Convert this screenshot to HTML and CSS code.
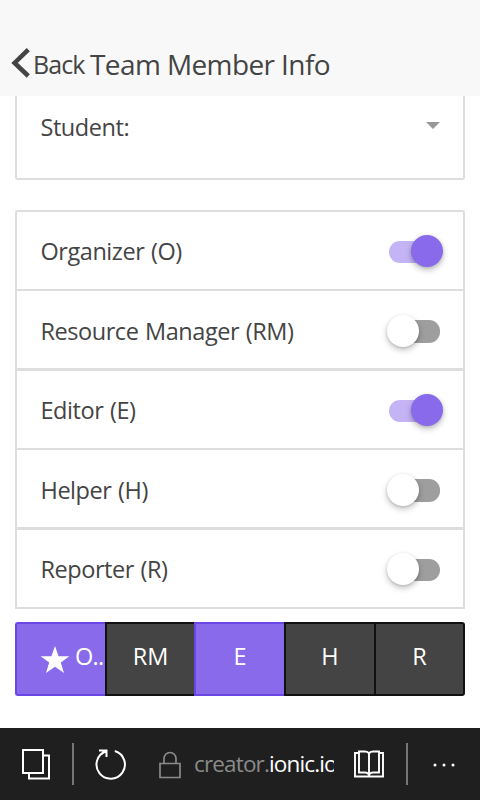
FILE: index.html
```html
<!DOCTYPE html>
<html lang="en">
<head>
<meta charset="utf-8">
<title>Team Member Info</title>
<link rel="stylesheet" href="styles.css">
</head>
<body>
<header class="header">
  <svg class="chevron" width="20" height="32" viewBox="0 0 20 32"><path d="M17.300 2.700 3.600 16l13.700 13" fill="none" stroke="#444" stroke-width="4.500"/></svg>
  <span class="back">Back</span>
  <h1 class="title">Team Member Info</h1>
</header>
<main class="content">
  <section class="card select-card">
    <span class="label">Student:</span>
    <span class="caret"></span>
  </section>
  <section class="card list">
    <div class="row"><span class="label">Organizer (O)</span><span class="toggle on"><i class="knob"></i></span></div>
    <div class="row low"><span class="label">Resource Manager (RM)</span><span class="toggle"><i class="knob"></i></span></div>
    <div class="row thick"><span class="label">Editor (E)</span><span class="toggle on"><i class="knob"></i></span></div>
    <div class="row low"><span class="label">Helper (H)</span><span class="toggle"><i class="knob"></i></span></div>
    <div class="row thick"><span class="label">Reporter (R)</span><span class="toggle"><i class="knob"></i></span></div>
  </section>
  <div class="buttons">
    <div class="button royal first"><svg class="star" width="30" height="28" viewBox="0 0 30 28"><path d="M15 0 18.600 10.200H29.400L20.800 16.600 24 27 15 20.800 6 27 9.200 16.600.6 10.200H11.400Z" fill="#fff"/></svg><span class="short">O..</span></div>
    <div class="button dark">RM</div>
    <div class="button royal">E</div>
    <div class="button dark">H</div>
    <div class="button dark last">R</div>
  </div>
</main>
<footer class="browser-bar">
  <svg class="tabs" width="28" height="31" viewBox="0 0 28 31" fill="none" stroke="#fff" stroke-width="2"><path d="M1 1H21V24H1ZM21 6.500H27V29.500H7V24"/></svg>
  <span class="divider"></span>
  <svg class="reload" width="32" height="32" viewBox="0 0 32 32" fill="none" stroke="#fff" stroke-width="2"><path d="M19.800 3A14.200 14.200 0 1 1 11 3.200M4 2.500H11.500V9M11.300 2.800 6 6.500"/></svg>
  <svg class="lock" width="22" height="28" viewBox="0 0 22 28" fill="none" stroke="#8b8b8b" stroke-width="1.700"><path d="M1 12.500H21V26.500H1ZM5 12.500V7.500a6 6 0 0 1 12 0V12.500"/></svg>
  <span class="url">creator.<b>ionic.io</b></span>
  <svg class="book" width="30" height="28" viewBox="0 0 30 28" fill="none" stroke="#fff" stroke-width="1.900"><path d="M5 3H1V26.500H29V3H25M15 3.500Q14 1.500 11 1.500H5V22.500H11Q14 22.500 15 25Q16 22.500 19 22.500H25V1.500H19Q16 1.500 15 3.500V25"/></svg>
  <span class="divider second"></span>
  <svg class="more" width="24" height="4" viewBox="0 0 24 4" fill="#fff"><circle cx="3" cy="2" r="1.500"/><circle cx="12" cy="2" r="1.500"/><circle cx="21" cy="2" r="1.500"/></svg>
</footer>
</body>
</html>
```
FILE: styles.css
```css
* { box-sizing: border-box; }
body {
  margin: 0;
  width: 480px;
  height: 800px;
  overflow: hidden;
  display: flex;
  flex-direction: column;
  background: #fff;
  color: #444;
  font-family: "Open Sans", "Noto Sans", sans-serif;
  font-size: 23.5px;
}
.header {
  flex: none;
  height: 96px;
  background: #f8f8f8;
  display: flex;
  padding: 47px 0 0 11px;
}
.chevron { flex: none; }
.back {
  width: 56px;
  margin-left: 2px;
  font-size: 25px;
  line-height: 35px;
  letter-spacing: -0.9px;
  white-space: nowrap;
}
.title {
  margin: 0 0 0 1px;
  font-size: 28px;
  font-weight: 400;
  line-height: 34px;
  letter-spacing: -0.6px;
  white-space: nowrap;
}
.content { flex: 1; padding: 0 15px; }
.card { border: 2px solid #ddd; border-radius: 3px; }
.select-card {
  height: 84px;
  border-top: 0;
  border-radius: 0 0 3px 3px;
  display: flex;
  justify-content: space-between;
  padding: 15px 23px 0 23.5px;
}
.label { line-height: 32px; white-space: nowrap; letter-spacing: -0.45px; word-spacing: 1px; }
.caret {
  height: 7px;
  margin-top: 11px;
  border: solid transparent;
  border-width: 7px 7.500px 0;
  border-top-color: #999;
}
.list { margin-top: 30px; border-radius: 3px 3px 0 0; }
.row {
  height: 77px;
  box-sizing: content-box;
  display: flex;
  justify-content: space-between;
  align-items: flex-start;
  padding: 0 20px 0 23.5px;
}
.row + .row { border-top: 2px solid #ddd; }
.row + .row.thick { border-top-width: 3px; }
.row .label { margin-top: 23px; }
.row.low .label { margin-top: 24px; }
.toggle {
  display: flex;
  width: 56px;
  height: 32px;
  margin-top: 23px;
  position: relative;
}
.row.low .toggle { margin-top: 23.5px; }
.toggle::before {
  content: "";
  position: absolute;
  left: 2px;
  top: 6px;
  width: 51px;
  height: 22px;
  border-radius: 11px;
  background: #9e9e9e;
}
.toggle.on::before { background: #c4b4f5; }
.row.low .toggle::before { top: 5.500px; height: 23px; }
.knob {
  width: 32px;
  height: 32px;
  border-radius: 50%;
  background: #fff;
  box-shadow: 0 3px 6px rgba(0, 0, 0, .24), 0 1px 3px rgba(0, 0, 0, .12);
  z-index: 1;
}
.on .knob { margin-left: 24px; background: #886aea; }
.buttons {
  display: grid;
  grid-template-columns: 90px 89px 90px 90px 91px;
  height: 74px;
  margin-top: 13px;
}
.button {
  display: flex;
  justify-content: center;
  overflow: hidden;
  border: 2px solid;
  border-right: 0;
  color: #fff;
  line-height: 32px;
  padding-top: 16px;
  white-space: nowrap;
}
.royal { background: #886aea; border-color: #6b46e5; }
.dark { background: #444; border-color: #111; }
.first { border-radius: 3px 0 0 3px; justify-content: flex-start; padding-left: 23px; }
.last { border-right: 2px solid #111; border-radius: 0 3px 3px 0; }
.star { flex: none; margin-top: 6px; }
.short { margin-left: 5px; letter-spacing: -0.7px; }
.browser-bar {
  flex: none;
  height: 72px;
  background: #1f1f1f;
  display: flex;
  align-items: center;
  padding-left: 22px;
}
.browser-bar > * { flex: none; }
.divider { width: 2px; height: 42px; margin-left: 22px; margin-bottom: 1px; background: #757575; }
.reload { margin-left: 20.500px; }
.lock { margin-left: 32.500px; margin-top: 2px; }
.url {
  width: 140px;
  margin-left: 13px;
  overflow: hidden;
  white-space: nowrap;
  color: #8b8b8b;
  font-size: 22.500px;
  line-height: 34px;
  letter-spacing: -0.85px;
}
.url b { color: #fff; font-weight: 400; }
.book { margin-left: 20px; }
.second { margin-left: 22px; }
.more { margin-left: 24px; margin-top: 2px; }
```
